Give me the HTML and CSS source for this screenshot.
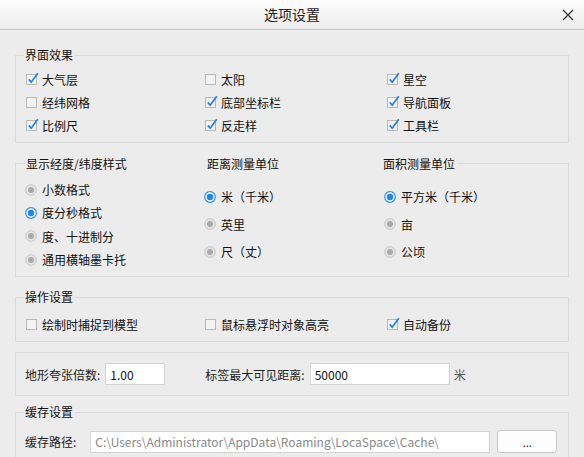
FILE: index.html
```html
<!DOCTYPE html>
<html>
<head>
<meta charset="utf-8">
<link rel="stylesheet" href="styles.css">
</head>
<body>
<div class="dialog">
  <div class="titlebar">
    <span class="title">选项设置</span>
    <svg class="close" width="12" height="12" viewBox="0 0 12 12"><path d="M1 1L11 11M11 1L1 11" stroke="#333" stroke-width="1.3" fill="none"/></svg>
  </div>

  <div class="group g1">
    <span class="legend">界面效果</span>
    <div class="grid3">
      <label class="item"><svg class="cb" width="14" height="14" viewBox="0 0 14 14"><rect x="0.5" y="2.5" width="10" height="10" fill="#f3f3f3" stroke="#b9b9b9"/><path d="M2.8 7.4L5.2 10.2L11.8 1.2" stroke="#1f7fe6" stroke-width="1.7" fill="none"/></svg>大气层</label>
      <label class="item"><svg class="cb" width="14" height="14" viewBox="0 0 14 14"><rect x="0.5" y="2.5" width="10" height="10" fill="#f3f3f3" stroke="#b9b9b9"/></svg>太阳</label>
      <label class="item"><svg class="cb" width="14" height="14" viewBox="0 0 14 14"><rect x="0.5" y="2.5" width="10" height="10" fill="#f3f3f3" stroke="#b9b9b9"/><path d="M2.8 7.4L5.2 10.2L11.8 1.2" stroke="#1f7fe6" stroke-width="1.7" fill="none"/></svg>星空</label>
      <label class="item"><svg class="cb" width="14" height="14" viewBox="0 0 14 14"><rect x="0.5" y="2.5" width="10" height="10" fill="#f3f3f3" stroke="#b9b9b9"/></svg>经纬网格</label>
      <label class="item"><svg class="cb" width="14" height="14" viewBox="0 0 14 14"><rect x="0.5" y="2.5" width="10" height="10" fill="#f3f3f3" stroke="#b9b9b9"/><path d="M2.8 7.4L5.2 10.2L11.8 1.2" stroke="#1f7fe6" stroke-width="1.7" fill="none"/></svg>底部坐标栏</label>
      <label class="item"><svg class="cb" width="14" height="14" viewBox="0 0 14 14"><rect x="0.5" y="2.5" width="10" height="10" fill="#f3f3f3" stroke="#b9b9b9"/><path d="M2.8 7.4L5.2 10.2L11.8 1.2" stroke="#1f7fe6" stroke-width="1.7" fill="none"/></svg>导航面板</label>
      <label class="item"><svg class="cb" width="14" height="14" viewBox="0 0 14 14"><rect x="0.5" y="2.5" width="10" height="10" fill="#f3f3f3" stroke="#b9b9b9"/><path d="M2.8 7.4L5.2 10.2L11.8 1.2" stroke="#1f7fe6" stroke-width="1.7" fill="none"/></svg>比例尺</label>
      <label class="item"><svg class="cb" width="14" height="14" viewBox="0 0 14 14"><rect x="0.5" y="2.5" width="10" height="10" fill="#f3f3f3" stroke="#b9b9b9"/><path d="M2.8 7.4L5.2 10.2L11.8 1.2" stroke="#1f7fe6" stroke-width="1.7" fill="none"/></svg>反走样</label>
      <label class="item"><svg class="cb" width="14" height="14" viewBox="0 0 14 14"><rect x="0.5" y="2.5" width="10" height="10" fill="#f3f3f3" stroke="#b9b9b9"/><path d="M2.8 7.4L5.2 10.2L11.8 1.2" stroke="#1f7fe6" stroke-width="1.7" fill="none"/></svg>工具栏</label>
    </div>
  </div>

  <div class="group g2">
    <div class="g2head">
      <span class="seg"></span>
      <span class="h1">显示经度/纬度样式</span>
      <span class="h2">距离测量单位</span>
      <span class="h3">面积测量单位</span>
      <span class="line"></span>
    </div>
    <div class="g2cols">
      <div class="col c1">
        <label class="ritem"><svg class="rb" width="12" height="12" viewBox="0 0 12 12"><circle cx="6" cy="6" r="5.3" fill="#e6e6e6" stroke="#c4c4c4"/><circle cx="6" cy="6" r="3" fill="#a9a9a9"/></svg>小数格式</label>
        <label class="ritem"><svg class="rb" width="12" height="12" viewBox="0 0 12 12"><circle cx="6" cy="6" r="5.3" fill="#fff" stroke="#2b8ef2" stroke-width="1.2"/><circle cx="6" cy="6" r="3.2" fill="#1e86f0"/></svg>度分秒格式</label>
        <label class="ritem"><svg class="rb" width="12" height="12" viewBox="0 0 12 12"><circle cx="6" cy="6" r="5.3" fill="#e6e6e6" stroke="#c4c4c4"/><circle cx="6" cy="6" r="3" fill="#a9a9a9"/></svg>度、十进制分</label>
        <label class="ritem"><svg class="rb" width="12" height="12" viewBox="0 0 12 12"><circle cx="6" cy="6" r="5.3" fill="#e6e6e6" stroke="#c4c4c4"/><circle cx="6" cy="6" r="3" fill="#a9a9a9"/></svg>通用横轴墨卡托</label>
      </div>
      <div class="col c2">
        <label class="ritem wide"><svg class="rb" width="12" height="12" viewBox="0 0 12 12"><circle cx="6" cy="6" r="5.3" fill="#fff" stroke="#2b8ef2" stroke-width="1.2"/><circle cx="6" cy="6" r="3.2" fill="#1e86f0"/></svg>米（千米）</label>
        <label class="ritem wide"><svg class="rb" width="12" height="12" viewBox="0 0 12 12"><circle cx="6" cy="6" r="5.3" fill="#e6e6e6" stroke="#c4c4c4"/><circle cx="6" cy="6" r="3" fill="#a9a9a9"/></svg>英里</label>
        <label class="ritem wide"><svg class="rb" width="12" height="12" viewBox="0 0 12 12"><circle cx="6" cy="6" r="5.3" fill="#e6e6e6" stroke="#c4c4c4"/><circle cx="6" cy="6" r="3" fill="#a9a9a9"/></svg>尺（丈）</label>
      </div>
      <div class="col c3">
        <label class="ritem wide"><svg class="rb" width="12" height="12" viewBox="0 0 12 12"><circle cx="6" cy="6" r="5.3" fill="#fff" stroke="#2b8ef2" stroke-width="1.2"/><circle cx="6" cy="6" r="3.2" fill="#1e86f0"/></svg>平方米（千米）</label>
        <label class="ritem wide"><svg class="rb" width="12" height="12" viewBox="0 0 12 12"><circle cx="6" cy="6" r="5.3" fill="#e6e6e6" stroke="#c4c4c4"/><circle cx="6" cy="6" r="3" fill="#a9a9a9"/></svg>亩</label>
        <label class="ritem wide"><svg class="rb" width="12" height="12" viewBox="0 0 12 12"><circle cx="6" cy="6" r="5.3" fill="#e6e6e6" stroke="#c4c4c4"/><circle cx="6" cy="6" r="3" fill="#a9a9a9"/></svg>公顷</label>
      </div>
    </div>
  </div>

  <div class="group g3">
    <span class="legend">操作设置</span>
    <div class="grid3 single">
      <label class="item"><svg class="cb" width="14" height="14" viewBox="0 0 14 14"><rect x="0.5" y="2.5" width="10" height="10" fill="#f3f3f3" stroke="#b9b9b9"/></svg>绘制时捕捉到模型</label>
      <label class="item"><svg class="cb" width="14" height="14" viewBox="0 0 14 14"><rect x="0.5" y="2.5" width="10" height="10" fill="#f3f3f3" stroke="#b9b9b9"/></svg>鼠标悬浮时对象高亮</label>
      <label class="item"><svg class="cb" width="14" height="14" viewBox="0 0 14 14"><rect x="0.5" y="2.5" width="10" height="10" fill="#f3f3f3" stroke="#b9b9b9"/><path d="M2.8 7.4L5.2 10.2L11.8 1.2" stroke="#1f7fe6" stroke-width="1.7" fill="none"/></svg>自动备份</label>
    </div>
  </div>

  <div class="group g4">
    <span class="flabel">地形夸张倍数:</span>
    <span class="input in1">1.00</span>
    <span class="flabel lbl2">标签最大可见距离:</span>
    <span class="input in2">50000</span>
    <span class="unit">米</span>
  </div>

  <div class="group g5">
    <span class="legend">缓存设置</span>
    <div class="pathrow">
      <span class="flabel">缓存路径:</span>
      <span class="input path">C:\Users\Administrator\AppData\Roaming\LocaSpace\Cache\</span>
      <span class="btn">...</span>
    </div>
  </div>
</div>
</body>
</html>
```

FILE: styles.css
```css
html, body {
  margin: 0;
  padding: 0;
}
body {
  width: 584px;
  height: 457px;
  overflow: hidden;
  background: #ececec;
  font-family: "Noto Sans CJK SC", "Noto Sans", sans-serif;
  font-size: 12px;
  color: #111;
}
.dialog {
  width: 584px;
}
.titlebar {
  height: 29px;
  border-bottom: 1px solid #c6c6c6;
  background: linear-gradient(#fdfdfd, #ececec);
  display: flex;
  align-items: center;
  justify-content: center;
  position: relative;
}
.title {
  font-size: 14px;
  line-height: 29px;
  color: #222;
}
.close {
  position: absolute;
  right: 10px;
  top: 9px;
}
.group {
  margin: 0 15px;
  border: 1px solid #dadada;
  display: flow-root;
}
.legend {
  display: block;
  width: max-content;
  height: 16px;
  line-height: 16px;
  margin: -9px 0 0 8px;
  padding: 0 2px 0 1px;
  background: #ececec;
}
.g1 {
  margin-top: 25px;
  height: 86px;
}
.grid3 {
  display: grid;
  grid-template-columns: 179px 182px 1fr;
  grid-auto-rows: 23px;
  padding: 5px 0 0 10px;
}
.item {
  display: flex;
  align-items: center;
  height: 23px;
  white-space: nowrap;
}
.cb {
  margin-right: 2px;
  margin-top: -2px;
  flex: none;
}
.g2 {
  margin-top: 20px;
  border-top: none;
  height: 113px;
}
.g2head {
  display: flex;
  align-items: center;
  height: 16px;
  margin-top: -8px;
}
.seg {
  width: 9px;
  border-top: 1px solid #dadada;
}
.h1 {
  width: 181px;
  padding-left: 1px;
}
.h2 {
  width: 176px;
}
.h3 {
  padding-right: 2px;
}
.line {
  flex: 1;
  border-top: 1px solid #dadada;
}
.g2cols {
  display: grid;
  grid-template-columns: 179px 180px 1fr;
  padding-left: 10px;
}
.c1 {
  padding-top: 7px;
}
.c2, .c3 {
  padding-top: 12px;
}
.ritem {
  display: flex;
  align-items: center;
  height: 23.3px;
  white-space: nowrap;
}
.ritem.wide {
  height: 27.5px;
}
.rb {
  margin-right: 5px;
  margin-left: -1px;
  flex: none;
}
.g3 {
  margin-top: 20px;
  height: 43px;
}
.grid3.single {
  padding-top: 8px;
}
.g4 {
  margin-top: 10px;
  height: 42px;
  display: flex;
  align-items: center;
  padding-left: 9px;
}
.flabel {
  white-space: nowrap;
  color: #222;
}
.input {
  display: inline-flex;
  align-items: center;
  height: 20px;
  background: #fff;
  border: 1px solid #d3d3d3;
  padding: 0 4px;
  font-family: "Noto Sans CJK SC", "Noto Sans", sans-serif;
  font-size: 12px;
  color: #111;
}
.in1 {
  width: 50px;
  margin-left: 5px;
}
.lbl2 {
  margin-left: 40px;
}
.in2 {
  width: 130px;
  margin-left: 5px;
}
.unit {
  margin-left: 4px;
  color: #555;
}
.g5 {
  margin-top: 16px;
  height: 60px;
  border-bottom: none;
}
.pathrow {
  display: flex;
  align-items: center;
  padding: 10px 0 0 9px;
}
.path {
  width: 390px;
  margin-left: 14px;
  color: #8a8a8a;
}
.btn {
  margin-left: 7px;
  width: 58px;
  height: 21px;
  background: #fdfdfd;
  border: 1px solid #c9c9c9;
  border-radius: 3px;
  display: flex;
  align-items: center;
  justify-content: center;
  font-size: 11px;
  line-height: 10px;
}
```
